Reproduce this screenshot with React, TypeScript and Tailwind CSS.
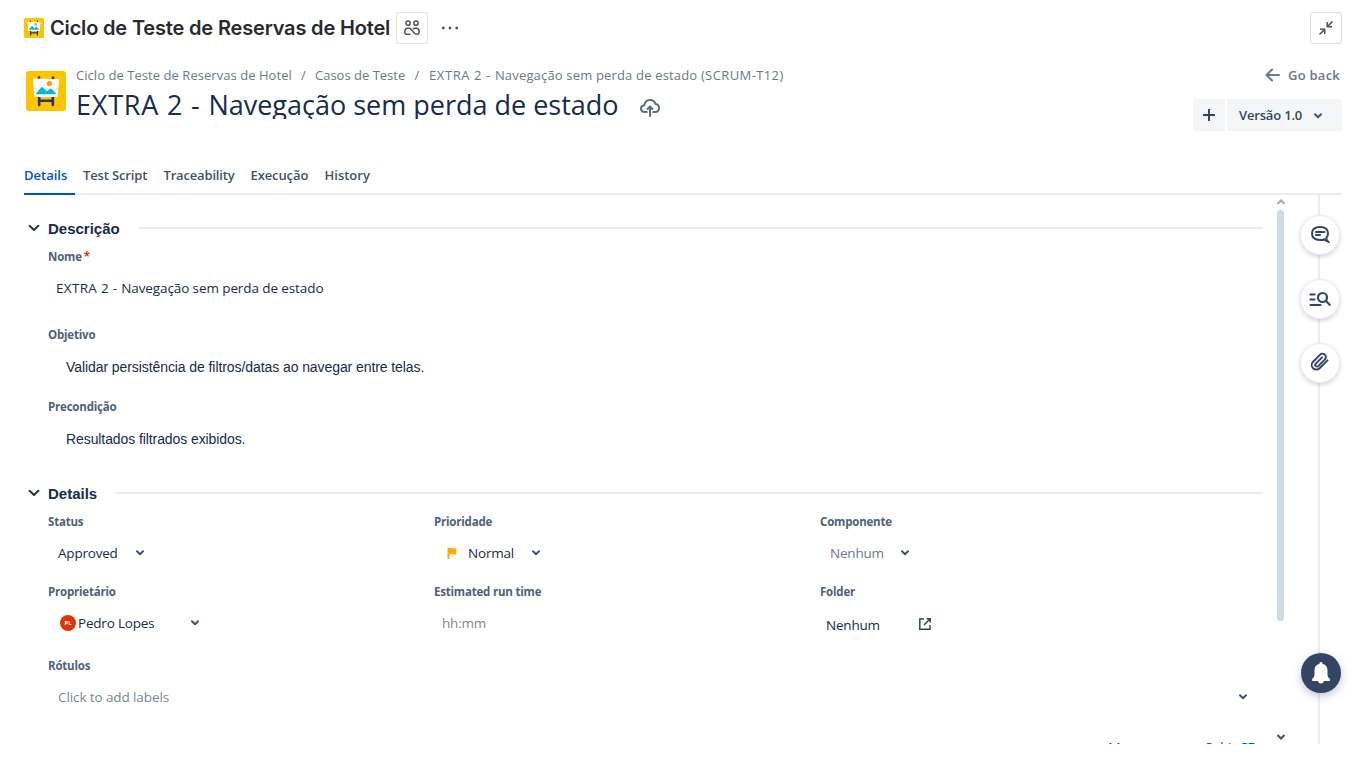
import React from "react";

const ui = "font-['Open_Sans','Noto_Sans',sans-serif]";

function Chevron({ className = "" }: { className?: string }) {
  return (
    <svg viewBox="0 0 8 6" className={`h-[6px] w-[8px] shrink-0 ${className}`} fill="none" stroke="#42526E" strokeWidth="2" strokeLinecap="round" strokeLinejoin="round">
      <path d="M1 1.3 4 4.2 7 1.3" />
    </svg>
  );
}

function ProjectIcon({ className }: { className: string }) {
  return (
    <svg viewBox="0 0 40 40" className={className}>
      <rect width="40" height="40" rx="3" fill="#FFC400" />
      <path d="M13 6.500v3M27 6.500v3M13.200 25v9M26.800 25v9M13 29.700h14" stroke="#253858" strokeWidth="2.600" strokeLinecap="round" />
      <path d="M8.200 7.500 32.300 8.200Q33.200 8.200 33.100 9L31.600 25Q31.500 26 30.600 26H9.200Q8.300 26 8.200 25L7 8.500Q7 7.500 8.200 7.500Z" fill="#fff" />
      <path d="M9.500 23.300 15.200 16.400Q16 15.600 16.900 16.400L20.800 20.300 24 17.800Q24.800 17.300 25.600 18L30.700 23.300Z" fill="#00B8D9" />
      <circle cx="23.400" cy="12.700" r="2.600" fill="#FF991F" />
    </svg>
  );
}

function Section({ title, children }: { title: string; children: React.ReactNode }) {
  return (
    <section>
      <div className="flex h-5 items-center">
        <svg viewBox="0 0 12 8" className="ml-1 h-2 w-3 shrink-0" fill="none" stroke="#253858" strokeWidth="2" strokeLinecap="round" strokeLinejoin="round">
          <path d="M1.600 1.800 6 6 10.400 1.800" />
        </svg>
        <h2 className="ml-2 pt-[2px] font-['Liberation_Sans',sans-serif] text-[15px] font-bold leading-5 text-[#172B4D]">{title}</h2>
        <div className="ml-[18px] h-[2px] flex-1 bg-[#EBECF0]" />
      </div>
      {children}
    </section>
  );
}

function Label({ children }: { children: React.ReactNode }) {
  return <div className="h-4 whitespace-nowrap text-[11.500px] font-bold leading-4 tracking-[-0.200px] text-[#505F79]">{children}</div>;
}

function RoundButton({ children }: { children: React.ReactNode }) {
  return (
    <button className="flex size-10 items-center justify-center rounded-full border border-[#EBECF0] bg-white shadow-[0_2px_4px_rgba(9,30,66,0.18)]">
      {children}
    </button>
  );
}

const tabs = [
  { name: "Details", style: "w-[43px] text-[#0052CC]" },
  { name: "Test Script", style: "w-[64.500px] tracking-[-0.130px]" },
  { name: "Traceability", style: "w-[71px] tracking-[-0.170px]" },
  { name: "Execução", style: "w-[58px] tracking-[-0.100px]" },
  { name: "History", style: "w-[46px]" },
];

export default function App() {
  return (
    <div className={`relative h-[763px] w-[1365px] overflow-hidden bg-white text-[13.500px] text-[#172B4D] ${ui}`}>
      <header className="flex h-14 items-center pl-6 pr-[23px]">
        <ProjectIcon className="size-5" />
        <h1 className="ml-[6px] w-[340px] whitespace-nowrap font-[Inter] text-[20px] font-semibold leading-6 tracking-[-0.170px] text-[#292A2E]">Ciclo de Teste de Reservas de Hotel</h1>
        <button className="ml-[6px] flex size-8 items-center justify-center rounded-[3px] border border-[#DDDEE1]">
          <svg viewBox="0 0 16 16" className="size-4" fill="none" stroke="#505258" strokeWidth="1.500">
            <circle cx="4" cy="3.200" r="2.100" /><circle cx="12" cy="3.200" r="2.100" />
            <path d="M6.300 14.300H2.800Q.8 14.300.8 12.300V11.300Q.8 8.200 3.800 8.200H4.500Q6.200 8.200 7.200 9.400L10 12.800Q11.200 14.300 12.800 14.300 15.200 14.300 15.200 12V11.300Q15.200 8.200 12.300 8.200H11.500Q9.800 8.200 8.900 9.300" />
          </svg>
        </button>
        <svg viewBox="0 0 18 4" className="ml-[13px] h-1 w-[18px]" fill="#505258"><circle cx="2.300" cy="2" r="1.400" /><circle cx="9" cy="2" r="1.400" /><circle cx="15.700" cy="2" r="1.400" /></svg>
        <button className="ml-auto flex size-8 items-center justify-center rounded-[3px] border border-[#DDDEE1]">
          <svg viewBox="0 0 16 16" className="size-4" fill="none" stroke="#505258" strokeWidth="1.600"><path d="M14.500 1.500 9.500 6.500M9.300 2v4.700H14M1.500 14.500 6.500 9.500M2 9.300h4.700V14" /></svg>
        </button>
      </header>

      <div className="flex h-[104px] pl-[26px] pr-[23px]">
        <ProjectIcon className="mt-[15px] size-10 shrink-0" />
        <div className="ml-[10px] flex-1">
          <nav className="mt-[10px] flex h-5 items-center whitespace-nowrap text-[13px] text-[#6B778C]">
            <span className="w-[216px] tracking-[0.050px]">Ciclo de Teste de Reservas de Hotel</span><span className="w-[23px] text-center">/</span>
            <span className="w-[90px]">Casos de Teste</span><span className="w-6 text-center">/</span>
            <span className="whitespace-pre tracking-[0.170px]"><span className="tracking-[0.600px]">EXTRA 2 - </span>Navegação sem perda de estado <span className="tracking-[0.400px]">(SCRUM-T12)</span></span>
          </nav>
          <div className="flex">
            <div className="h-[33px] w-[543px] overflow-hidden whitespace-pre text-[27px] leading-[38px]"><span className="tracking-[0.800px]">EXTRA 2 - </span>Navegação sem perda de estado</div>
            <svg viewBox="0 0 20 18" className="ml-[21px] mt-[13px] h-[18px] w-5" fill="none" stroke="#5E6C84" strokeWidth="2" strokeLinejoin="round"><path d="M7.500 13H5Q1 13 1 9.500 1 6.500 4.300 6.200 5.300 1 10 1 14.500 1 15.500 5 19 5.500 19 9 19 13 15 13H12.500M10 17.700V8M7 10.500 10 7.500 13 10.500" /></svg>
          </div>
        </div>
        <div className="flex w-[149px] flex-col">
          <div className="mt-[9px] flex h-5 items-end justify-end font-semibold text-[#6B778C]">
            <svg viewBox="0 0 16 14" className="mb-[3px] mr-[7px] h-[14px] w-4" fill="none" stroke="#6B778C" strokeWidth="2" strokeLinecap="round" strokeLinejoin="round"><path d="M14 7H2M7 1.500 1.500 7 7 12.500" /></svg>
            <span className="w-[54px] whitespace-nowrap text-[13px] leading-5 tracking-[0.250px]">Go back</span>
          </div>
          <div className="mt-[14px] flex gap-[2px] text-[#344563]">
            <button className="flex h-8 w-8 items-center justify-center rounded-l-[3px] bg-[#F4F5F7]"><svg viewBox="0 0 12 12" className="size-3" stroke="#344563" strokeWidth="2"><path d="M6 0v12M0 6h12" /></svg></button>
            <button className="flex h-8 flex-1 items-center rounded-r-[3px] bg-[#F4F5F7] pl-3 pt-px text-[13px] font-semibold"><span className="w-16 whitespace-nowrap text-left tracking-[-0.170px]">Versão 1.0</span><Chevron className="ml-[11px]" /></button>
          </div>
        </div>
      </div>

      <div className="relative ml-6 mr-[23px] flex h-[35px] gap-4 border-b-2 border-[#EBECF0] text-[13px] font-semibold leading-[30px] text-[#42526E]">
        {tabs.map((t) => <span key={t.name} className={`whitespace-nowrap ${t.style}`}>{t.name}</span>)}
        <div className="absolute -bottom-[2px] left-0 h-[2px] w-[51px] bg-[#0052CC]" />
      </div>

      <div className="flex h-[549px] overflow-hidden">
        <main className="w-[1263px] shrink-0 pl-6 pt-[23px]">
          <Section title="Descrição">
            <div className="pl-6">
              <div className="mt-[11px] flex"><Label>Nome<span className="ml-[2px] text-[#DE350B]">*</span></Label></div>
              <div className="ml-2 mt-[13px] h-5 whitespace-pre leading-5 tracking-[-0.100px]"><span className="tracking-[0.300px]">EXTRA 2 - </span>Navegação sem perda de estado</div>
              <div className="mt-[29px]"><Label>Objetivo</Label></div>
              <div className="ml-[18px] mt-[14px] h-5 font-['Liberation_Sans'] text-[14px] leading-5 tracking-[-0.080px]">Validar persistência de filtros/datas ao navegar entre telas.</div>
              <div className="mt-[22px]"><Label>Precondição</Label></div>
              <div className="ml-[18px] mt-[14px] h-5 font-['Liberation_Sans'] text-[14px] leading-5 tracking-[-0.090px]">Resultados filtrados exibidos.</div>
            </div>
          </Section>
          <div className="h-[34px]" />
          <Section title="Details">
            <div className="ml-6 mt-[11px] grid grid-cols-[386px_386px_386px] tracking-[-0.200px]">
              <div className="h-[70px]"><Label>Status</Label><div className="ml-[10px] mt-[13px] flex h-5 items-center"><span className="w-[78px]">Approved</span><Chevron /></div></div>
              <div className="h-[70px]"><Label>Prioridade</Label><div className="ml-[13px] mt-[13px] flex h-5 items-center"><svg viewBox="0 0 10 12" className="mr-[11px] h-3 w-[10px]" fill="#FFAB00"><path d="M.5 1H5l1 .500h3.300v6H5.500L4.500 7H2.500v5h-2Z" /></svg><span className="w-[64px]">Normal</span><Chevron /></div></div>
              <div className="h-[70px]"><Label>Componente</Label><div className="ml-[10px] mt-[13px] flex h-5 items-center"><span className="w-[71px] text-[#6B778C]">Nenhum</span><Chevron /></div></div>
              <div className="h-[74px]"><Label>Proprietário</Label><div className="ml-3 mt-[13px] flex h-5 items-center"><span className="mr-[2px] flex size-4 items-center justify-center rounded-full bg-[#DE350B] text-[6px] font-bold tracking-normal text-white">PL</span><span className="w-[113px]">Pedro Lopes</span><Chevron /></div></div>
              <div className="h-[74px]"><Label>Estimated run time</Label><div className="ml-2 mt-[13px] h-5 leading-5 text-[#7A869A]">hh:mm</div></div>
              <div className="h-[74px]"><Label>Folder</Label><div className="ml-[6px] mt-[15px] flex h-5 items-center"><span className="w-[93px]">Nenhum</span><svg viewBox="0 0 12 12" className="mb-[2px] size-3" fill="none" stroke="#344563" strokeWidth="1.500"><path d="M5 1H.8v10.200H11V7M7.500.8h3.700v3.700M5 7 11 1" /></svg></div></div>
              <div className="col-span-3"><Label>Rótulos</Label><div className="ml-[10px] mt-[13px] flex h-5 w-[1189px] items-center justify-between tracking-[-0.100px] text-[#7A869A]"><span>Click to add labels</span><Chevron /></div></div>
            </div>
            <div className="mt-[31px] flex h-5 justify-end pr-[9px] text-[14px] leading-5 text-[#0052CC]"><span className="w-[97px]">Mover</span><span className="w-[49px] whitespace-nowrap tracking-[-0.600px]">Subir CF</span></div>
          </Section>
        </main>
        <div className="flex w-9 flex-col pl-[14px] pt-1">
          <svg viewBox="0 0 8 6" className="h-[6px] w-2 shrink-0" fill="none" stroke="#A9A9A9" strokeWidth="2"><path d="M.5 5 4 1.500 7.500 5" /></svg>
          <div className="mt-[5px] h-[411px] w-[7px] shrink-0 rounded-full bg-[#CFDAE3]" />
          <svg viewBox="0 0 8 6" className="mt-[113px] h-[6px] w-2 shrink-0" fill="none" stroke="#505050" strokeWidth="2"><path d="M.5 1 4 4.500 7.500 1" /></svg>
        </div>
        <aside className="relative ml-px w-10">
          <div className="absolute left-[18px] top-0 h-full w-[2px] bg-[#EBECF0]" />
          <div className="relative flex flex-col gap-6 pt-5">
            <RoundButton><svg viewBox="0 0 20 18" className="mb-[2px] h-[18px] w-5" fill="none" stroke="#344563" strokeWidth="2" strokeLinecap="round"><path d="M14.500 14.200Q12.500 15 10 15 2 14.800 2 8.500 2 2 10 2 18 2 18 8.500 18 10.800 16.500 12.500V14.500L18 16.500 13.800 14.700M6 7h8.500M6 10h4" /></svg></RoundButton>
            <RoundButton><svg viewBox="0 0 22 16" className="h-4 w-[22px]" fill="none" stroke="#344563" strokeWidth="2.200" strokeLinecap="round"><path d="M1.500 3.500H5.500M1.500 8.500H5.500M1.500 14h10M17 10 20.700 13.700" /><circle cx="13.500" cy="6.500" r="4.500" /></svg></RoundButton>
            <RoundButton><svg viewBox="0 0 24 24" className="mb-[2px] size-5" fill="none" stroke="#344563" strokeWidth="2.300" strokeLinecap="round"><path d="m21 10-9.500 9.500a5.500 5.500 0 0 1-7.800-7.800l8.500-8.500a4 4 0 0 1 5.700 5.700l-8 8a2 2 0 0 1-3-3l7.500-7.500" /></svg></RoundButton>
          </div>
        </aside>
      </div>
      <button className="absolute left-[1301px] top-[653px] flex size-10 items-center justify-center rounded-full bg-[#344563] shadow-[0_3px_8px_rgba(9,30,66,0.25)]">
        <svg viewBox="0 0 20 22" className="mb-px h-[22px] w-5" fill="#fff"><path d="M10 0Q11.500 0 11.700 2 16.500 3.200 16.500 8.500V13Q16.500 15 18.500 16.500 20 18.800 18 19H13Q12.500 21.500 10 21.500 7.500 21.500 7 19H2Q0 18.800 1.500 16.500 3.500 15 3.500 13V8.500Q3.500 3.200 8.300 2 8.500 0 10 0Z" /></svg>
      </button>
    </div>
  );
}
